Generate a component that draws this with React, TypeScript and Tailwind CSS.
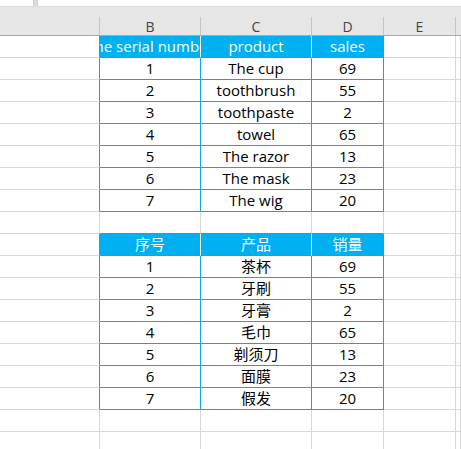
import React from "react";

const FONT = { fontFamily: '"Open Sans", "Noto Sans CJK SC", sans-serif' };

const widths = ["w-[100px]", "w-[101px]", "w-[111px]", "w-[72px]", "w-[72px]", "flex-1"];

type Row =
  | { kind: "head"; cells: string[] }
  | { kind: "data"; cells: string[] }
  | { kind: "empty"; beforeHead?: boolean };

const t1: string[][] = [
  ["1", "The cup", "69"],
  ["2", "toothbrush", "55"],
  ["3", "toothpaste", "2"],
  ["4", "towel", "65"],
  ["5", "The razor", "13"],
  ["6", "The mask", "23"],
  ["7", "The wig", "20"],
];
const t2: string[][] = [
  ["1", "茶杯", "69"],
  ["2", "牙刷", "55"],
  ["3", "牙膏", "2"],
  ["4", "毛巾", "65"],
  ["5", "剃须刀", "13"],
  ["6", "面膜", "23"],
  ["7", "假发", "20"],
];

const rows: Row[] = [
  { kind: "head", cells: ["The serial number", "product", "sales"] },
  ...t1.map((c) => ({ kind: "data" as const, cells: c })),
  { kind: "empty", beforeHead: true },
  { kind: "head", cells: ["序号", "产品", "销量"] },
  ...t2.map((c) => ({ kind: "data" as const, cells: c })),
  { kind: "empty" },
  { kind: "empty" },
];

function GridRow({ row }: { row: Row }) {
  const inTable = row.kind !== "empty";
  return (
    <div className="flex h-[22px]">
      {widths.map((w, i) => {
        let cls = `${w} h-[22px] shrink-0 border-r border-b flex items-center justify-center overflow-hidden whitespace-nowrap text-[15px] `;
        let content: string | null = null;
        if (i === 0) {
          cls += inTable ? "border-r-[#0ea5ec] border-b-[#d8d8d8]" : "border-[#d8d8d8]";
        } else if (i >= 1 && i <= 3) {
          content = inTable ? (row as { cells: string[] }).cells[i - 1] : null;
          if (row.kind === "head") {
            cls += "bg-[#00b0f0] text-white border-b-[#0ea5ec] ";
            cls += i === 3 ? "border-r-[#0ea5ec]" : "border-r-white";
          } else if (row.kind === "data") {
            cls += "bg-white text-black border-b-[#0ea5ec] border-r-[#0ea5ec]";
          } else {
            cls += "border-r-[#d8d8d8] ";
            cls += row.beforeHead ? "border-b-[#0ea5ec]" : "border-b-[#d8d8d8]";
          }
        } else {
          cls += "border-[#d8d8d8]";
        }
        return (
          <div key={i} className={cls}>
            {content}
          </div>
        );
      })}
    </div>
  );
}

export default function App() {
  const letters = ["", "B", "C", "D", "E", ""];
  return (
    <div className="w-[461px] h-[449px] overflow-hidden bg-white" style={FONT}>
      <div className="h-[6px] bg-white flex">
        <div className="ml-[33px] w-[5px] h-full bg-[#dcdcdc] border-x border-[#cfcfcf]" />
      </div>
      <div className="h-[30px] bg-[#e6e6e6] border-b border-[#ababab] flex flex-col">
        <div className="h-[11px] border-t border-[#dcdcdc]" />
        <div className="flex h-[18px]">
          {letters.map((l, i) => (
            <div
              key={i}
              className={`${widths[i]} shrink-0 h-full flex items-center justify-center text-[14px] text-[#444444] ${i < 5 ? "border-r border-[#c4c4c4]" : ""}`}
            >
              {l}
            </div>
          ))}
        </div>
      </div>
      {rows.map((r, idx) => (
        <GridRow key={idx} row={r} />
      ))}
    </div>
  );
}
